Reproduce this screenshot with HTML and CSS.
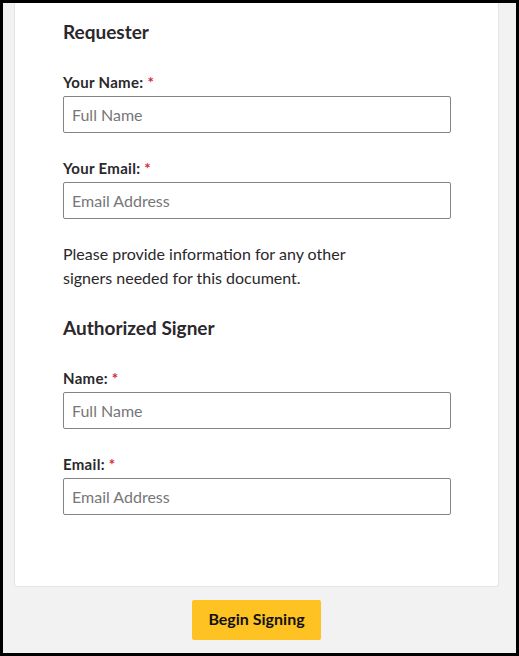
FILE: index.html
```html
<!DOCTYPE html>
<html lang="en">

<head>
    <meta charset="UTF-8">
    <meta name="viewport" content="width=device-width, initial-scale=1.0">
    <title>Begin Signing</title>
    <link rel="stylesheet" href="styles.css">
</head>

<body>
    <div class="frame">
        <form class="card">
            <h2>Requester</h2>

            <label for="reqName">Your Name: <span class="req">*</span></label>
            <input type="text" id="reqName" placeholder="Full Name">

            <label for="reqEmail">Your Email: <span class="req">*</span></label>
            <input type="email" id="reqEmail" placeholder="Email Address">

            <p class="note">Please provide information for any other<br>signers needed for this document.</p>

            <h2>Authorized Signer</h2>

            <label for="signName">Name: <span class="req">*</span></label>
            <input type="text" id="signName" placeholder="Full Name">

            <label for="signEmail">Email: <span class="req">*</span></label>
            <input type="email" id="signEmail" placeholder="Email Address">
        </form>

        <div class="actions">
            <button type="button">Begin Signing</button>
        </div>
    </div>
</body>

</html>
```

FILE: styles.css
```css
body {
    margin: 0;
    font-family: Lato, "Liberation Sans", sans-serif;
    color: #2b282c;
}

.frame {
    height: 656px;
    box-sizing: border-box;
    border: 3px solid #000;
    background: #f2f2f2;
    overflow: hidden;
}

.card {
    width: 485px;
    box-sizing: border-box;
    margin-left: 11px;
    padding: 17px 0 71px 48px;
    background: #fff;
    border: 1px solid #e4e4e4;
    border-top: none;
    border-radius: 0 0 3px 3px;
}

h2 {
    margin: 0 0 28px;
    font-size: 19px;
    line-height: 24px;
    font-weight: bold;
}

label {
    display: block;
    font-size: 15px;
    line-height: 20px;
    font-weight: bold;
    letter-spacing: 0.3px;
    margin-bottom: 4px;
}

.req {
    color: #d4283c;
}

input {
    display: block;
    width: 388px;
    height: 37px;
    box-sizing: border-box;
    margin: 0 0 25px;
    padding: 0 8px;
    border: 1px solid #848484;
    border-radius: 2px;
    font-family: inherit;
    font-size: 16px;
    color: #2b282c;
}

input:last-child {
    margin-bottom: 0;
}

input::placeholder {
    color: #777;
}

.note {
    margin: -2px 0 26px;
    font-size: 16px;
    line-height: 24px;
}

.actions {
    width: 485px;
    margin-left: 11px;
    padding-top: 13px;
    text-align: center;
}

button {
    width: 129px;
    height: 40px;
    padding: 0 0 3px;
    border: none;
    border-radius: 2px;
    background: #fec323;
    color: #111;
    font-family: inherit;
    font-size: 16px;
    font-weight: bold;
    cursor: pointer;
}
```
